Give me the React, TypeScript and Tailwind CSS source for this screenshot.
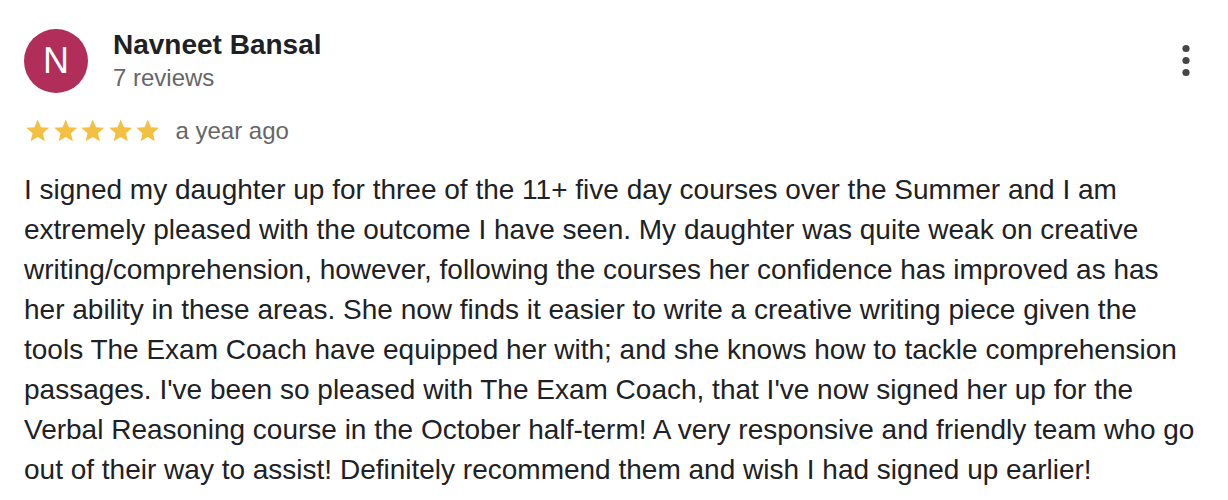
const review = {
  name: "Navneet Bansal",
  initial: "N",
  reviews: "7 reviews",
  rating: 5,
  when: "a year ago",
  text: "I signed my daughter up for three of the 11+ five day courses over the Summer and I am extremely pleased with the outcome I have seen. My daughter was quite weak on creative writing/comprehension, however, following the courses her confidence has improved as has her ability in these areas. She now finds it easier to write a creative writing piece given the tools The Exam Coach have equipped her with; and she knows how to tackle comprehension passages. I've been so pleased with The Exam Coach, that I've now signed her up for the Verbal Reasoning course in the October half-term! A very responsive and friendly team who go out of their way to assist! Definitely recommend them and wish I had signed up earlier!",
};

function Star() {
  return (
    <svg viewBox="0 0 24 24" className="w-[27.5px] h-[28px] shrink-0" fill="#f4c041">
      <path d="M12 17.27L18.18 21l-1.64-7.03L22 9.24l-7.19-.61L12 2 9.19 8.63 2 9.24l5.46 4.73L5.82 21z" />
    </svg>
  );
}

function MoreIcon() {
  return (
    <svg viewBox="0 0 36 36" className="w-9 h-9 mt-[14px]" fill="#444746">
      <circle cx="18" cy="5.5" r="3.6" />
      <circle cx="18" cy="17.5" r="3.6" />
      <circle cx="18" cy="29.5" r="3.6" />
    </svg>
  );
}

export default function App() {
  return (
    <div
      className="w-full min-h-[500px] bg-white px-6 pt-[29px] text-[#202124]"
      style={{ fontFamily: '"Liberation Sans", Arial, sans-serif' }}
    >
      <div className="flex items-start">
        <div className="w-16 h-16 rounded-full bg-[#b12d5a] flex items-center justify-center text-white text-[36px] leading-none shrink-0">
          {review.initial}
        </div>
        <div className="ml-[25px] flex flex-col">
          <span className="text-[28px] leading-[32px] font-bold">{review.name}</span>
          <span className="text-[24px] leading-[32px] text-[#666666] mt-px">{review.reviews}</span>
        </div>
        <div className="ml-auto">
          <MoreIcon />
        </div>
      </div>

      <div className="flex items-center mt-[21px] h-8">
        <div className="flex">
          {Array.from({ length: review.rating }).map((_, i) => (
            <Star key={i} />
          ))}
        </div>
        <span className="ml-[14px] text-[24px] leading-[32px] text-[#666666]">{review.when}</span>
      </div>

      <p className="mt-[23px] max-w-[1172px] text-[28px] leading-[40px]">{review.text}</p>
    </div>
  );
}
